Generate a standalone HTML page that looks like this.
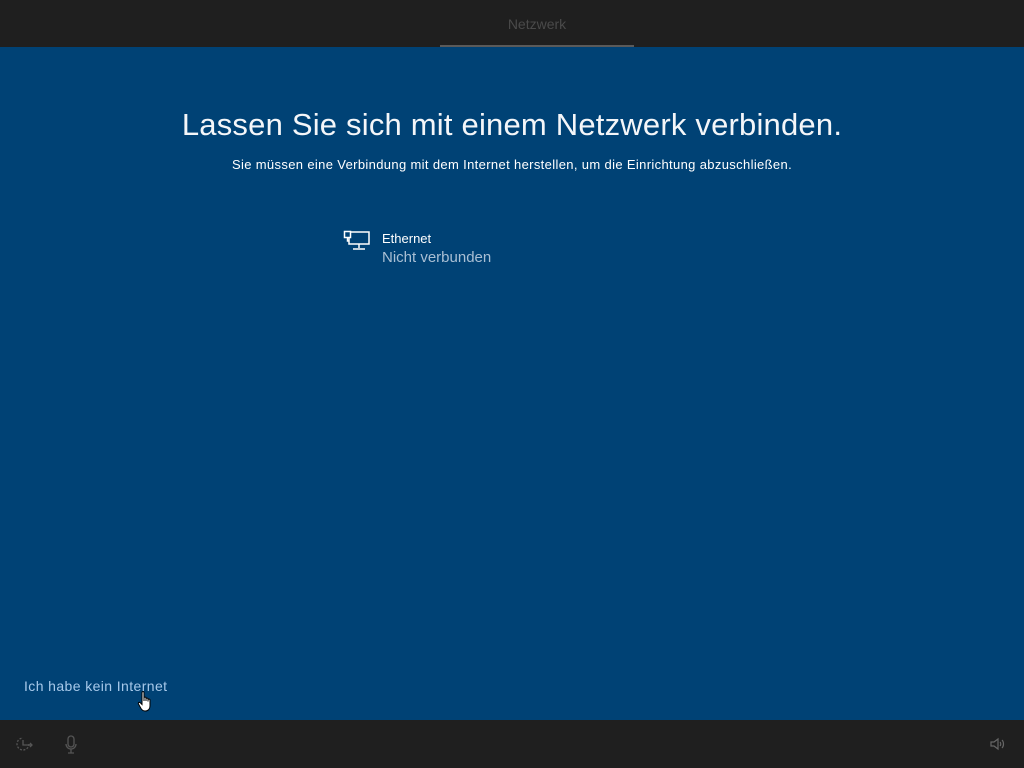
<!DOCTYPE html>
<html><head><meta charset="utf-8"><style>
*{margin:0;padding:0;box-sizing:border-box}
body{width:1024px;height:768px;overflow:hidden;background:#004275;font-family:"Liberation Sans",sans-serif;position:relative}
.top{position:absolute;left:0;top:0;width:1024px;height:47px;background:#1f1f1f}
.top .t{position:absolute;left:440px;width:194px;top:16px;text-align:center;color:#4a4a4a;font-size:14px}
.top .u{position:absolute;left:440px;width:194px;top:45px;height:2px;background:#5a5a5a}
.bot{position:absolute;left:0;top:720px;width:1024px;height:48px;background:#1f1f1f}
h1{position:absolute;left:0;width:1024px;top:107px;text-align:center;color:#f4f6f9;font-weight:normal;font-size:31px;letter-spacing:0.2px}
.sub{position:absolute;left:0;width:1024px;top:157px;text-align:center;color:#fff;font-size:13px;letter-spacing:0.35px}
.eth{position:absolute;left:382px;top:231px;color:#fff;font-size:13px}
.nv{position:absolute;left:382px;top:249px;color:#a9bfd4;font-size:15px}
.link{position:absolute;left:24px;top:678px;color:#a7c9ea;font-size:14px;letter-spacing:0.4px}
</style></head><body>
<div class="top"><div class="t">Netzwerk</div><div class="u"></div></div>
<h1>Lassen Sie sich mit einem Netzwerk verbinden.</h1>
<div class="sub">Sie müssen eine Verbindung mit dem Internet herstellen, um die Einrichtung abzuschließen.</div>
<svg style="position:absolute;left:343px;top:230px" width="28" height="22" viewBox="0 0 28 22" fill="none" stroke="#fff" stroke-width="1.5">
<rect x="6" y="2" width="20" height="12"/><rect x="1.5" y="1.5" width="6" height="6" fill="#004275"/><path d="M4.5 7.5V11H6"/><path d="M16 14v4M10 19h12"/></svg>
<div class="eth">Ethernet</div>
<div class="nv">Nicht verbunden</div>
<div class="link">Ich habe kein Internet</div>
<svg style="position:absolute;left:137px;top:690px" width="18" height="24" viewBox="0 0 18 24">
<path d="M5 2.5c0-1.2 2-1.2 2 0V11l0-3c0-1.2 2-1.2 2 0v3-2c0-1.2 2-1.2 2 0v2.5-1.5c0-1.2 2-1.2 2 0V16c0 3-2 5-4.5 5H8c-2 0-3-1-4-2.5L1.5 14c-.7-1.2.8-2.3 1.8-1.2L5 14.5z" fill="#fff" stroke="#000" stroke-width="1"/></svg>
<div class="bot">
<svg style="position:absolute;left:15px;top:16px" width="20" height="18" viewBox="0 0 20 18" fill="none" stroke="#555" stroke-width="1.3"><path d="M14 8a6 6 0 1 1-6-6" stroke-dasharray="2 1.5"/><path d="M8 4v5h9M15 7l2 2-2 2"/></svg>
<svg style="position:absolute;left:64px;top:15px" width="14" height="20" viewBox="0 0 14 20" fill="none" stroke="#555" stroke-width="1.3"><rect x="4" y="1" width="6" height="11" rx="3"/><path d="M2 9a5 5 0 0 0 10 0M7 14v4M4 18h6"/></svg>
<svg style="position:absolute;left:990px;top:17px" width="16" height="14" viewBox="0 0 16 14" fill="none" stroke="#666" stroke-width="1.2"><path d="M1 5h3l4-3v10l-4-3H1z"/><path d="M10 5c1 1 1 3 0 4M12 3c2 2 2 6 0 8"/></svg>
</div>
</body></html>
